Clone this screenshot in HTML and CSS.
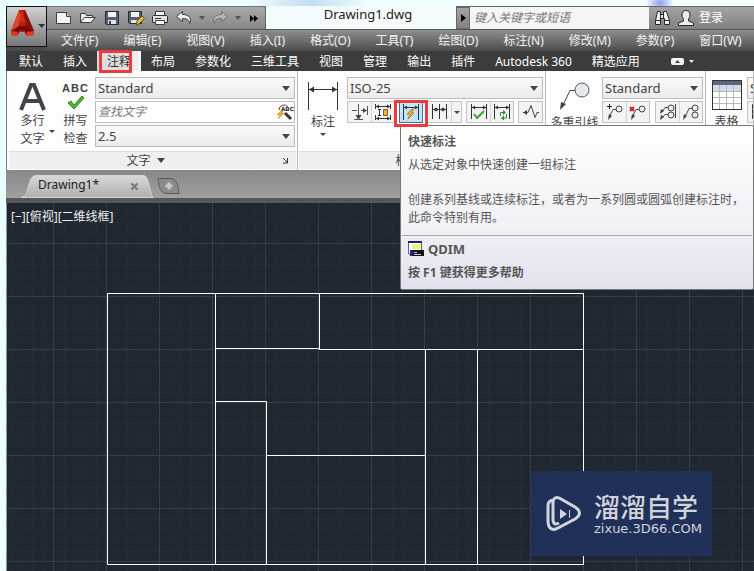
FILE: index.html
```html
<!DOCTYPE html>
<html lang="zh-CN">
<head>
  <meta charset="UTF-8" />
  <meta name="viewport" content="width=device-width, initial-scale=1" />
  <title>Drawing1.dwg</title>
  <link rel="stylesheet" href="styles.css">
</head>
<body>
<div class="app">

  <header class="header">
    <button class="logo-btn" aria-label="应用程序菜单">
      <svg width="39" height="39" viewBox="0 0 39 39">
        <path d="M12 3h6l9 21v4l-7 1-3-4h-4l-3 4-6-1v-4z" fill="#b71c10"/>
        <path d="M12 3l3 8-4 9-7 4z" fill="#e0442c"/>
        <path d="M18 3l9 21-7-4-5-9z" fill="#8e0f08"/>
        <path d="M15 3l4 14-4-3-4 3z" fill="#cf2e1b"/>
        <path d="M4 24l8-5h6l9 5-8 1-2-2h-4l-2 2z" fill="#6f0a06"/>
        <path d="M4 24l7 1-1 4-6-1zM20 25l7-1v4l-7 1z" fill="#dc3a24"/>
        <path d="M31 17h7l-3 4z" fill="#2b3238"/>
      </svg>
    </button>

    <div class="title-bar">
      <div class="quick-access">
        <button class="qa-btn" aria-label="新建"><svg width="18" height="16" viewBox="0 0 18 16"><path d="M1.500 2.500h10l4 4v7h-14z" fill="#f4f4f4" stroke="#3a4048"/><path d="M11.500 2.500v4h4" fill="#ccc" stroke="#3a4048"/></svg></button>
        <button class="qa-btn" aria-label="打开"><svg width="18" height="16" viewBox="0 0 18 16"><path d="M1.500 12.500v-9h5l1 2h6v2" fill="#e6e8ea" stroke="#3a4048"/><path d="M1.500 12.500l4-5h11l-5 5z" fill="#f4f4f4" stroke="#3a4048"/></svg></button>
        <button class="qa-btn" aria-label="保存"><svg width="16" height="16" viewBox="0 0 16 16"><path d="M1.500 1.500h13v13h-12l-1-1z" fill="#54616d" stroke="#252e38"/><path d="M4 2h8v5H4z" fill="#f0f2f4"/><path d="M4 10h8v4H4z" fill="#dfe4e8"/><path d="M5 11h2v3H5z" fill="#444"/></svg></button>
        <button class="qa-btn" aria-label="另存为"><svg width="18" height="16" viewBox="0 0 18 16"><path d="M1.500 1.500h13v12h-12l-1-1z" fill="#54616d" stroke="#252e38"/><path d="M4 2h8v5H4z" fill="#f0f2f4"/><path d="M4 10h6v3H4z" fill="#dfe4e8"/><path d="M9 15l1-4 5-5 2.500 2.500-5 5z" fill="#f0b848" stroke="#6b4512"/></svg></button>
        <button class="qa-btn" aria-label="打印"><svg width="18" height="16" viewBox="0 0 18 16"><path d="M4.500 6V1.500h9V6" fill="#f4f4f4" stroke="#3a4048"/><path d="M2.500 5.500h13l1 1v6h-15v-6z" fill="#dfe2e5" stroke="#2b3138"/><path d="M4.500 10.500h9v4h-9z" fill="#fff" stroke="#3a4048"/><path d="M4 8.500h6" stroke="#333"/></svg></button>
        <button class="qa-btn" aria-label="放弃"><svg width="18" height="16" viewBox="0 0 18 16"><path d="M1.500 6.500l6-5v3c6 0 8 3 8 6.500 0 1-.5 2-1 2.500 0-3-2-5-7-5v3z" fill="#eceff1" stroke="#3a4048"/></svg></button>
        <button class="qa-more" aria-label="放弃列表"><svg width="8" height="5" viewBox="0 0 8 5"><path d="M1 0h6L4 4z" fill="#555"/></svg></button>
        <button class="qa-btn" aria-label="重做"><svg width="18" height="16" viewBox="0 0 18 16"><path d="M16.500 6.500l-6-5v3c-6 0-8 3-8 6.500 0 1 .5 2 1 2.500 0-3 2-5 7-5v3z" fill="#b4b4b4" stroke="#707070"/></svg></button>
        <button class="qa-more" aria-label="重做列表"><svg width="8" height="5" viewBox="0 0 8 5"><path d="M1 0h6L4 4z" fill="#555"/></svg></button>
        <button class="qa-end" aria-label="更多"><svg width="9" height="7" viewBox="0 0 9 7"><path d="M0 0l4 3.500L0 7zM4 0l4 3.500L4 7z" fill="#000"/></svg></button>
      </div>
      <div class="doc-title">Drawing1.dwg</div>
      <div class="info-center">
        <button class="info-toggle" aria-label="展开"><svg width="5" height="8" viewBox="0 0 5 8"><path d="M0 0l5 4-5 4z" fill="#000"/></svg></button>
        <input class="info-search" type="text" placeholder="键入关键字或短语" aria-label="搜索">
        <button class="info-btn" aria-label="查找"><svg width="18" height="18" viewBox="0 0 18 18"><path d="M4.500 2.500h3v3h3v-3h3l3 9v4h-5v-6h-4v6h-5v-4z" fill="#f0f0f0" stroke="#22272c"/><path d="M2 11.500h5M11 11.500h5M7.500 5v5M10.500 5v5" stroke="#22272c"/></svg></button>
        <button class="info-btn login"><svg width="18" height="18" viewBox="0 0 18 18"><path d="M9 1.500c3 0 4 2 4 4.500 0 2-1 3-1.500 4v2l5 2v2.500h-15V14l5-2v-2C6 9 5 8 5 6c0-2.500 1-4.500 4-4.500z" fill="#eee" stroke="#22272c"/></svg>登录</button>
      </div>
    </div>

    <nav class="menu-bar">
      <a href="#">文件(F)</a><a href="#">编辑(E)</a><a href="#">视图(V)</a><a href="#">插入(I)</a><a href="#">格式(O)</a><a href="#">工具(T)</a><a href="#">绘图(D)</a><a href="#">标注(N)</a><a href="#">修改(M)</a><a href="#">参数(P)</a><a href="#">窗口(W)</a>
    </nav>
  </header>

  <div class="ribbon-tabs">
    <button>默认</button>
    <button>插入</button>
    <button class="active">注释</button>
    <button>布局</button>
    <button>参数化</button>
    <button>三维工具</button>
    <button>视图</button>
    <button>管理</button>
    <button>输出</button>
    <button>插件</button>
    <button>Autodesk 360</button>
    <button>精选应用</button>
    <button class="minimize" aria-label="最小化功能区"><svg width="26" height="10" viewBox="0 0 26 10"><rect x="1" y="1" width="13" height="7" rx="2" fill="#f2f2f2"/><path d="M5 6l2.500-3L10 6z" fill="#444"/><path d="M19 3h5l-2.500 3z" fill="#eee"/></svg></button>
  </div>

  <div class="ribbon">
    <section class="panel panel-text">
      <div class="panel-body">
        <button class="big-btn mtext">
          <svg width="28" height="30" viewBox="0 0 28 30"><path d="M2 28L12 3h3l10 25M6 19h15" fill="none" stroke="#40444a" stroke-width="4"/></svg>
          <span>多行<br>文字</span>
          <i class="caret"></i>
        </button>
        <button class="big-btn spell">
          <b class="abc">ABC</b>
          <svg width="18" height="15" viewBox="0 0 18 15"><path d="M1 8l3-2 3 4 8-9 2 2L7 14z" fill="#4fb52e" stroke="#2f8a1b"/></svg>
          <span>拼写<br>检查</span>
        </button>
        <div class="fields">
          <label class="combo"><select aria-label="文字样式"><option>Standard</option></select></label>
          <div class="find">
            <input type="text" placeholder="查找文字" aria-label="查找文字">
            <svg width="18" height="18" viewBox="0 0 18 18"><path d="M3 7a5 5 0 0 1 9-3" fill="none" stroke="#444"/><path d="M9 10l6 6" stroke="#333" stroke-width="3"/><path d="M6 7L1 12h3l-2 4 6-6H5l3-3z" fill="#f0b429" stroke="#b9770e" stroke-width=".5"/><text x="5" y="8" class="mini-abc">ABC</text></svg>
          </div>
          <label class="combo"><select aria-label="文字高度"><option>2.5</option></select></label>
        </div>
      </div>
      <footer class="panel-title"><button>文字<i class="arrow"></i></button>
        <button class="launcher" aria-label="文字样式管理器"><svg width="7" height="7" viewBox="0 0 7 7"><path d="M1 1l4 4M5.500 1v5H1" fill="none" stroke="#333"/></svg></button>
      </footer>
    </section>

    <section class="panel panel-dim">
      <div class="panel-body">
        <button class="big-btn dim">
          <svg width="32" height="30" viewBox="0 0 32 30"><path d="M1.500 1v28M30.500 1v28M2 8.500h28" stroke="#333" fill="none"/><path d="M2 8.500l5-3v6zM30 8.500l-5-3v6z" fill="#333"/></svg>
          <span>标注</span>
          <i class="caret"></i>
        </button>
        <div class="fields">
          <label class="combo"><select aria-label="标注样式"><option>ISO-25</option></select></label>
          <div class="tools">
            <div class="group">
              <button aria-label="打断"><svg width="18" height="18" viewBox="0 0 18 18"><path d="M1 7.500h5M10 7.500h5M7.500 1v15M16.500 3v9M3 16.500h9" stroke="#555"/><path d="M7.500 17L4.500 12h6zM16 7.500l-4-2.500v5z" fill="#444"/></svg></button>
              <button aria-label="调整间距"><svg width="18" height="18" viewBox="0 0 18 18"><path d="M1.500 1v5M16.500 1v5M2 3.500h14M1.500 12v5M16.500 12v5M2 15.500h14M4 6.500h3M4 12.500h3M5.500 6v7" stroke="#333"/><path d="M5 1.500v4l-3-2zM13 1.500v4l3-2zM5 13.500v4l-3-2zM13 13.500v4l3-2z" fill="#333"/><path d="M9.500 6.500h4v6h-4z" fill="#f2b632" stroke="#8a5a10"/></svg></button>
            </div>
            <div class="quick">
              <button class="quick-btn" aria-label="快速标注" aria-describedby="qdim-tip"><svg width="20" height="18" viewBox="0 0 20 18"><path d="M2.500 1v16M17.500 1v16M3 4.500h14" stroke="#333"/><path d="M3 4.500l3-2v4zM17 4.500l-3-2v4z" fill="#333"/><path d="M11 6l-5 5h3l-2 5 6-6h-3l3-4z" fill="#f7b733" stroke="#b87a16"/></svg></button>
              <div class="tooltip" id="qdim-tip" role="tooltip">
                <div class="tip-text">
                  <h2>快速标注</h2>
                  <p>从选定对象中快速创建一组标注</p>
                  <p class="tip-more">创建系列基线或连续标注，或者为一系列圆或圆弧创建标注时，此命令特别有用。</p>
                </div>
                <div class="tip-foot">
                  <p class="tip-cmd"><svg width="16" height="16" viewBox="0 0 16 16"><path d="M.5 1h13v12H.5z" fill="#fff" stroke="#666"/><path d="M0 0h14v2H0z" fill="#1c1c7c"/><path d="M4 3h9v5H4z" fill="#eef27a"/><path d="M2 9h14v6H2z" fill="#111"/><path d="M2 9h3v6H2z" fill="#1c1c9c"/><path d="M6 11.500h3M6 13.500h7" stroke="#ccc"/></svg>QDIM</p>
                  <p class="tip-help">按 F1 键获得更多帮助</p>
                </div>
              </div>
            </div>
            <div class="group">
              <button aria-label="连续"><svg width="18" height="18" viewBox="0 0 18 18"><path d="M1.500 1v15M8.500 1v15M15.500 1v15M2 6.500h13" stroke="#333"/><path d="M2 6.500l3-2v4zM8 6.500l-3-2v4zM9 6.500l3-2v4zM15 6.500l-3-2v4z" fill="#444"/></svg></button>
              <button class="slim" aria-label="更多标注"><i class="caret"></i></button>
            </div>
            <div class="group">
              <button aria-label="更新"><svg width="18" height="18" viewBox="0 0 18 18"><path d="M1.500 1v15M16.500 1v15M2 4.500h14" stroke="#333"/><path d="M2 4.500l3-2v4zM16 4.500l-3-2v4z" fill="#333"/><path d="M4 11l3 4 7-7" fill="none" stroke="#3da32a" stroke-width="2"/></svg></button>
              <button aria-label="重新关联"><svg width="18" height="18" viewBox="0 0 18 18"><path d="M1.500 1v15M16.500 1v15M2 4.500h14" stroke="#333"/><path d="M2 4.500l3-2v4zM16 4.500l-3-2v4z" fill="#333"/><path d="M7.500 13V9.500H11M13.500 11v4H10" fill="none" stroke="#2f8a2a"/><path d="M10 7v5l3-2.500zM11 12.500v5l-3-2.500z" fill="#2f8a2a"/></svg></button>
            </div>
            <div class="group last">
              <button aria-label="折弯标注"><svg width="18" height="18" viewBox="0 0 18 18"><path d="M1 9.500h5l3-7 4 12 2-5h2" fill="none" stroke="#444"/><path d="M1 9.500l4-2.500v5z" fill="#444"/></svg></button>
            </div>
          </div>
        </div>
      </div>
      <footer class="panel-title"><button>标注<i class="arrow"></i></button><span class="launcher"></span></footer>
    </section>

    <section class="panel panel-leader">
      <div class="panel-body">
        <button class="big-btn leader">
          <svg width="32" height="30" viewBox="0 0 32 30"><circle cx="23" cy="9" r="7" fill="#e6eaee" stroke="#555"/><path d="M16 9.500h-5L3 26" fill="none" stroke="#444"/><path d="M1 29l1-8 5 2z" fill="#444"/></svg>
          <span>多重引线</span>
        </button>
        <div class="fields">
          <label class="combo"><select aria-label="多重引线样式"><option>Standard</option></select></label>
          <div class="tools spread">
            <div class="group">
              <button aria-label="添加引线"><svg width="18" height="18" viewBox="0 0 18 18"><circle cx="13" cy="6" r="3" fill="#eee" stroke="#444"/><path d="M10 6.500H7L3 14" fill="none" stroke="#444"/><path d="M2 17l1-6 3 2z" fill="#444"/><path d="M1 3.500h5M3.500 1v5" stroke="#222"/></svg></button>
              <button aria-label="删除引线"><svg width="18" height="18" viewBox="0 0 18 18"><circle cx="13" cy="6" r="3" fill="#eee" stroke="#444"/><path d="M10 6.500H7L3 14" fill="none" stroke="#444"/><path d="M2 17l1-6 3 2z" fill="#444"/><path d="M1 4l4 4M5 4L1 8" stroke="#c22" stroke-width="2"/></svg></button>
            </div>
            <div class="group">
              <button aria-label="对齐"><svg width="18" height="18" viewBox="0 0 18 18"><circle cx="12" cy="5" r="3" fill="#eee" stroke="#444"/><circle cx="12" cy="12" r="3" fill="#eee" stroke="#444"/><path d="M9 4.500H6L3 9M9 11.500H6L3 15M16.500 1v14" fill="none" stroke="#444"/><path d="M1 11l1-5 3 2zM1 17l1-5 3 2z" fill="#444"/></svg></button>
              <button aria-label="合并"><svg width="18" height="18" viewBox="0 0 18 18"><circle cx="13" cy="5" r="3" fill="#eee" stroke="#444"/><circle cx="13" cy="12" r="3" fill="#eee" stroke="#444"/><path d="M10 5.500H7L3 14" fill="none" stroke="#444"/><path d="M1 17l1-6 3 2z" fill="#444"/></svg></button>
            </div>
          </div>
        </div>
      </div>
      <footer class="panel-title"></footer>
    </section>

    <section class="panel panel-table">
      <div class="panel-body">
        <button class="big-btn table">
          <svg width="30" height="30" viewBox="0 0 30 30"><path d="M.5.5h29v29H.5z" fill="#fff" stroke="#333"/><path d="M1 1h28v4H1z" fill="#5a6a7c"/><path d="M1 5h28v6H1z" fill="#d3dbe8"/><path d="M1 11.500h28M1 17.500h28M1 23.500h28M7.500 5v24M14.500 5v24M21.500 5v24" stroke="#b4b8be"/><path d="M.5.5h29v29H.5z" fill="none" stroke="#333"/></svg>
          <span>表格</span>
        </button>
        <div class="fields">
          <label class="combo"><select aria-label="表格样式"><option>Standard</option></select></label>
          <div class="tools">
            <div class="group"><button aria-label="提取数据"><svg width="18" height="18" viewBox="0 0 18 18"><path d="M1.500 1.500h5v4h-5zM1.500 6.500h5v4h-5zM1.500 11.500h5v4h-5zM9 3.500h7M9 8.500h7" fill="#eee" stroke="#333"/></svg></button></div>
          </div>
        </div>
      </div>
      <footer class="panel-title"></footer>
    </section>
  </div>

  <div class="file-tabs">
    <div class="file-tab">
      <svg class="tab-shape" width="132" height="23" viewBox="0 0 132 23">
        <defs><linearGradient id="tabFill" x1="0" y1="0" x2="0" y2="1"><stop offset="0" stop-color="#d9d9d9"/><stop offset="1" stop-color="#aeaeae"/></linearGradient></defs>
        <path d="M0 22.500c6-1 6-6 8-13C10 3 11 .5 16 .5h105c5 0 5 3 7 9 2 7 2 11 4 13z" fill="url(#tabFill)" stroke="#d6d6d6"/>
      </svg>
      <a href="#">Drawing1*</a>
      <button aria-label="关闭"><svg width="9" height="9" viewBox="0 0 9 9"><path d="M1.500 1.500l6 6M7.500 1.500l-6 6" stroke="#777" stroke-width="2"/></svg></button>
    </div>
    <button class="new-tab" aria-label="新图形"><svg width="24" height="18" viewBox="0 0 24 18"><path d="M1 1.500h13c5 1 7 5 8 15H9C3 15 2 10 1 1.500z" fill="#8b8b8b" stroke="#5c5c5c"/><path d="M12 5.500v7M8.500 9h7" stroke="#c9c9c9" stroke-width="3"/></svg></button>
  </div>

  <main class="canvas">
    <svg class="drawing" width="100%" height="100%">
      <defs>
        <pattern id="grid" width="53" height="53" patternUnits="userSpaceOnUse" x="46" y="40">
          <path d="M11.500 0v53M21.500 0v53M32.500 0v53M43.500 0v53M0 11.500h53M0 21.500h53M0 32.500h53M0 43.500h53" stroke="#252b34"/>
          <path d="M.5 0v53M0 .5h53" stroke="#363d46" fill="none"/>
        </pattern>
      </defs>
      <rect width="100%" height="100%" fill="url(#grid)"/>
      <path class="plan" d="M100.500 90.500h476v271h-476zM208.500 90v271M312.500 90v56M208 145.500h105M312 146.500h264M208 198.500h51.500v163M259 252.500h159M418.500 146v215M470.500 146v215"/>
    </svg>
    <div class="view-label">[−][俯视][二维线框]</div>
    <div class="watermark">
      <svg width="36" height="36" viewBox="0 0 36 36"><path d="M8 4C3 4 2 7 2 10v15c0 8 5 10 10 7l17-9c6-4 6-8 0-12L15 3C10 0 7 2 7 7v16c0 5 2 6 6 4" fill="none" stroke="#d0d4dc" stroke-width="3"/><path d="M14 13l7 5-7 5zM23 14h1v8h-1z" fill="#d0d4dc"/></svg>
      <div class="brand"><strong>溜溜自学</strong><span>zixue.3D66.COM</span></div>
    </div>
  </main>
</div>
</body>
</html>
```
FILE: styles.css
```css
*, *::before, *::after {
  box-sizing: border-box;
}
body {
  margin: 0;
  height: 100vh;
  overflow: hidden;
  background: radial-gradient(ellipse at 660px 3px, #8fa0f0 0, transparent 14px), radial-gradient(ellipse at 310px 4px, #c4dcf4 0, transparent 60px), linear-gradient(90deg, #eaffff, #f8ffff);
  font: 12px/18px "Noto Sans", "Noto Sans CJK SC", sans-serif;
  color: #444;
}
button, input, select {
  font: inherit;
  color: inherit;
  margin: 0;
  padding: 0;
  border: 0;
  background: none;
}
a {
  color: inherit;
  text-decoration: none;
}
svg {
  display: block;
  flex: none;
}
h2, p {
  margin: 0;
}
.app {
  display: flex;
  flex-direction: column;
  height: 100vh;
  padding: 6px 0 0 6px;
}

/* title bar + menu */
.header {
  display: grid;
  grid-template-columns: 41px minmax(0, 1fr);
  grid-template-rows: 24px 21px;
  flex: none;
  background: #4a4a4a;
}
.logo-btn {
  grid-row: span 2;
  height: 41px;
  border: 1px solid #111;
  background: linear-gradient(#d2d2d2, #787878);
}
.title-bar {
  display: flex;
  border-bottom: 1px solid #555;
  background: #f4fbfd;
}
.quick-access {
  display: flex;
  align-items: center;
  padding-left: 5px;
  background: linear-gradient(#aaa, #858585);
  border-top: 1px solid #777;
  border-right: 1px solid #666;
}
.qa-btn, .qa-more, .qa-end {
  display: flex;
  align-items: center;
  justify-content: center;
  width: 24px;
}
.qa-more {
  width: 12px;
}
.qa-end {
  width: 21px;
}
.doc-title {
  flex: 1;
  text-align: center;
  font-size: 13px;
  line-height: 16px;
  color: #222;
  padding-left: 14px;
}
.info-center {
  display: flex;
  width: 298px;
  background: linear-gradient(#a4a4a4, #808080);
  border-top: 1px solid #666;
}
.info-toggle {
  display: flex;
  align-items: center;
  justify-content: center;
  width: 14px;
  border: 1px solid #666;
}
.info-search {
  width: 179px;
  padding-left: 4px;
  background: #f5f5f5;
  font-style: italic;
}
.info-search::placeholder, .find input::placeholder {
  color: #777;
  opacity: 1;
}
.info-btn {
  display: flex;
  align-items: center;
  gap: 4px;
  padding-left: 4px;
  color: #fff;
}
.login {
  padding-left: 6px;
}
.menu-bar {
  display: flex;
  gap: 25px;
  padding: 2px 0 0 14px;
  white-space: nowrap;
  color: #f2f2f2;
  background: linear-gradient(#8e8e8e, #4c4c4c);
}

/* ribbon tabs */
.ribbon-tabs {
  display: flex;
  flex: none;
  height: 20px;
  padding-left: 3px;
  background: #3c3c3c;
  color: #fff;
}
.ribbon-tabs button {
  padding: 2px 10px 0;
  white-space: nowrap;
}
.ribbon-tabs .active {
  position: relative;
  color: #333;
  background: linear-gradient(90deg, #ddd 60%, #f6f6f6);
}
.ribbon-tabs .active::after {
  content: "";
  position: absolute;
  left: 2px;
  top: -1px;
  width: 33px;
  height: 23px;
  border: 3px solid #ee3a3c;
  z-index: 2;
}
.ribbon-tabs .minimize {
  padding-left: 20px;
}

/* ribbon */
.ribbon {
  display: flex;
  flex: none;
  height: 99px;
  padding-left: 2px;
  background: #fdfdfd;
  border-left: 1px solid #777;
}
.panel {
  display: flex;
  flex-direction: column;
  flex: none;
  border-right: 1px solid #bbb;
}
.panel-text {
  width: 289px;
}
.panel-dim {
  width: 248px;
  padding-left: 1px;
}
.panel-leader {
  width: 160px;
  padding-left: 1px;
}
.panel-table {
  flex: 1;
  min-width: 0;
  overflow: hidden;
}
.panel-body {
  display: flex;
  flex: 1;
  padding: 6px 2px 0 0;
}
.panel-title {
  display: flex;
  align-items: center;
  height: 18px;
  margin: 0 1px 1px 0;
  background: #efefef;
  border-top: 1px solid #ddd;
}
.panel-title button:first-child {
  flex: 1;
}
.panel-title .launcher {
  width: 14px;
}
.arrow, .caret {
  display: inline-block;
  border: 4px solid transparent;
  border-top: 5px solid #444;
  border-bottom: 0;
}
.arrow {
  margin: 0 0 2px 6px;
}
.caret {
  border-width: 3px 3px 0;
}
.big-btn {
  display: flex;
  flex-direction: column;
  align-items: center;
  flex: none;
  white-space: nowrap;
}
.mtext, .spell {
  position: relative;
  width: 47px;
  padding-top: 5px;
}
.mtext .caret {
  position: absolute;
  right: 1px;
  bottom: 18px;
}
.spell {
  width: 39px;
}
.abc {
  font: bold 11px/13px "Liberation Sans", sans-serif;
  letter-spacing: 1px;
}
.spell svg {
  margin-bottom: 2px;
}
.dim {
  width: 48px;
  padding-top: 4px;
}
.dim span {
  margin: 2px 0;
}
.leader {
  width: 55px;
  padding-top: 4px;
}
.leader span, .table span {
  margin-top: 3px;
}
.table {
  width: 41px;
  padding-top: 3px;
}
.fields {
  display: flex;
  flex-direction: column;
  flex: 1;
  gap: 2px;
}
.combo {
  position: relative;
  display: block;
  height: 22px;
  border: 1px solid #bcbcbc;
  background: linear-gradient(#fafafa, #ececec);
}
.combo select {
  display: block;
  appearance: none;
  width: 100%;
  height: 20px;
  padding-left: 2px;
  font-size: 13px;
}
.combo::after {
  content: "";
  position: absolute;
  right: 4px;
  top: 8px;
  border: 4px solid transparent;
  border-top: 5px solid #444;
  border-bottom: 0;
}
.panel-table .combo {
  width: 100px;
}
.find {
  display: flex;
  align-items: center;
  height: 22px;
  border: 1px solid #bcbcbc;
  background: #fff;
}
.find input {
  flex: 1;
  min-width: 0;
  padding-left: 2px;
  font-style: italic;
}
.mini-abc {
  font: bold 6px "Liberation Sans", sans-serif;
}
.tools {
  display: flex;
  gap: 4px;
}
.spread {
  justify-content: space-between;
}
.group {
  display: flex;
  border: 1px solid #c4c4c4;
  background: #f3f3f3;
}
.group button {
  display: flex;
  align-items: center;
  justify-content: center;
  width: 23px;
  height: 20px;
}
.group button + button {
  border-left: 1px solid #d4d4d4;
}
.group .slim {
  width: 10px;
}
.last {
  margin-left: auto;
}
.quick {
  position: relative;
}
.quick-btn {
  display: flex;
  align-items: center;
  justify-content: center;
  width: 24px;
  height: 22px;
  border: 1px solid #3a72a8;
  background: #c5e3f8;
}
.quick::after {
  content: "";
  position: absolute;
  left: -5px;
  top: -1px;
  width: 34px;
  height: 27px;
  border: 3px solid #ee3a3c;
  z-index: 4;
}

/* tooltip under the quick dimension button */
.tooltip {
  position: absolute;
  left: 1px;
  top: 24px;
  width: 354px;
  z-index: 3;
  border: 1px solid #767676;
  border-radius: 2px;
  background: linear-gradient(#fff, #f1f1f6 60%, #e2e2ee);
  color: #555;
}
.tip-text {
  padding: 7px 7px 8px;
}
.tip-text h2 {
  font-size: 12px;
  line-height: 18px;
  margin-bottom: 5px;
}
.tip-more {
  margin-top: 17px;
}
.tip-foot {
  margin: 0 1px;
  padding: 4px 6px 7px;
  border-top: 1px solid #aaa;
  font-weight: bold;
}
.tip-cmd {
  display: flex;
  align-items: center;
  gap: 4px;
  font-size: 13px;
}
.tip-help {
  margin-top: 6px;
}

/* drawing tabs */
.file-tabs {
  display: flex;
  flex: none;
  align-items: flex-end;
  height: 33px;
  padding-left: 15px;
  border-bottom: 5px solid #575757;
  background: linear-gradient(#888, #a0a0a0);
}
.file-tab {
  position: relative;
  display: flex;
  align-items: center;
  justify-content: space-between;
  width: 132px;
  height: 23px;
  padding: 0 14px 0 17px;
  font-size: 13px;
  color: #222;
}
.tab-shape {
  position: absolute;
  left: 0;
  top: 0;
}
.file-tab a, .file-tab button {
  position: relative;
}
.file-tab a {
  margin-top: -3px;
  font-size: 12px;
}
.new-tab {
  margin: 0 0 3px 4px;
}

/* model space */
.canvas {
  position: relative;
  flex: 1;
  min-height: 0;
  border-left: 1px solid #8a9696;
  background: #212730;
}
.drawing {
  position: absolute;
  left: 0;
  top: 0;
}
.plan {
  fill: none;
  stroke: #fff;
}
.view-label {
  position: relative;
  padding: 5px 4px;
  color: #eee;
}
.watermark {
  position: absolute;
  right: 42px;
  bottom: 15px;
  display: flex;
  align-items: center;
  gap: 12px;
  width: 181px;
  height: 85px;
  padding-left: 15px;
  background: #203058;
  color: #d0d4dc;
}
.brand {
  white-space: nowrap;
}
.brand strong {
  display: block;
  font-size: 26px;
  font-weight: 500;
  line-height: 30px;
}
.brand span {
  display: block;
  font: 13px/14px "DejaVu Sans", sans-serif;
}
```
